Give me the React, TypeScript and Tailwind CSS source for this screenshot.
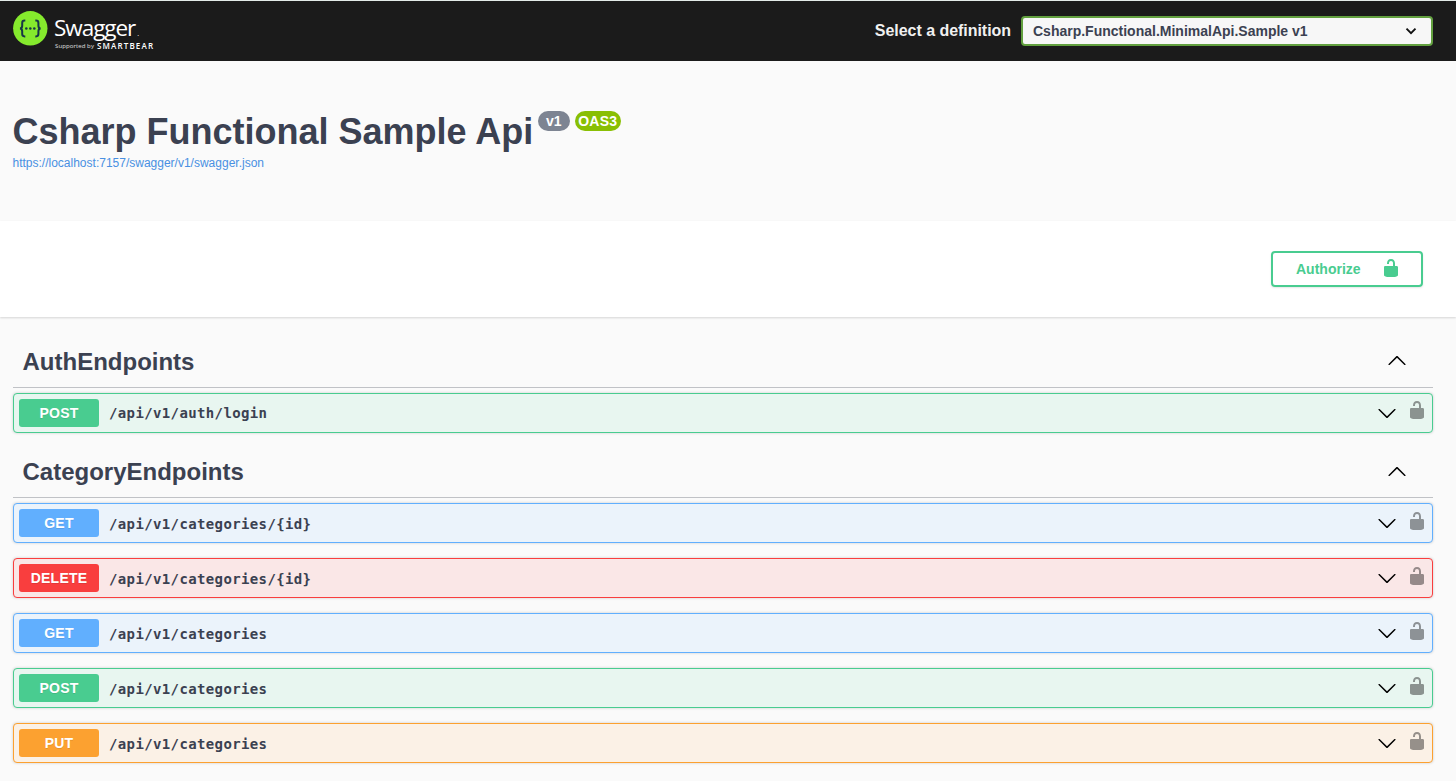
type Method = "GET" | "POST" | "PUT" | "DELETE";

const methodStyles: Record<Method, { row: string; badge: string }> = {
  GET: { row: "border-[#61affe] bg-[#ebf3fb]", badge: "bg-[#61affe]" },
  POST: { row: "border-[#49cc90] bg-[#e8f6f0]", badge: "bg-[#49cc90]" },
  PUT: { row: "border-[#fca130] bg-[#fbf1e6]", badge: "bg-[#fca130]" },
  DELETE: { row: "border-[#f93e3e] bg-[#fae7e7]", badge: "bg-[#f93e3e]" },
};

const sections: { name: string; shift: boolean; operations: { method: Method; path: string }[] }[] = [
  {
    name: "AuthEndpoints",
    shift: false,
    operations: [{ method: "POST", path: "/api/v1/auth/login" }],
  },
  {
    name: "CategoryEndpoints",
    shift: true,
    operations: [
      { method: "GET", path: "/api/v1/categories/{id}" },
      { method: "DELETE", path: "/api/v1/categories/{id}" },
      { method: "GET", path: "/api/v1/categories" },
      { method: "POST", path: "/api/v1/categories" },
      { method: "PUT", path: "/api/v1/categories" },
    ],
  },
];

function Unlocked({ className = "" }: { className?: string }) {
  return (
    <svg viewBox="0 0 20 20" className={`size-5 shrink-0 ${className}`} fill="currentColor" aria-hidden="true">
      <path d="M15.8 8H14V5.6C14 2.703 12.665 1 10 1 7.334 1 6 2.703 6 5.6V6h2v-.801C8 3.754 8.797 3 10 3c1.203 0 2 .754 2 2.199V8H4c-.553 0-1 .646-1 1.199V17c0 .549.428 1.139.951 1.307l1.197.387C5.672 18.861 6.55 19 7.1 19h5.8c.549 0 1.428-.139 1.951-.307l1.196-.387c.524-.167.953-.757.953-1.306V9.199C17 8.646 16.352 8 15.8 8z" />
    </svg>
  );
}

function Arrow({ up = false, className = "" }: { up?: boolean; className?: string }) {
  return (
    <svg viewBox="0 0 20 20" className={`size-5 shrink-0 ${className}`} fill="#000" aria-hidden="true">
      <path
        d={
          up
            ? "M17.418 14.908c.272.268.709.268.979 0s.271-.701 0-.969l-7.908-7.83c-.27-.268-.707-.268-.979 0l-7.908 7.83c-.27.268-.27.701 0 .969.271.268.709.268.979 0L10 7.767l7.418 7.141z"
            : "M17.418 6.109c.272-.268.709-.268.979 0s.271.701 0 .969l-7.908 7.83c-.27.268-.707.268-.979 0l-7.908-7.83c-.27-.268-.27-.701 0-.969.271-.268.709-.268.979 0L10 13.25l7.418-7.141z"
        }
      />
    </svg>
  );
}

function Logo() {
  return (
    <div className="flex items-start">
      <svg viewBox="0 0 35 35" className="mt-[10px] size-[35px] shrink-0" aria-hidden="true">
        <circle cx="17.3" cy="17.3" r="17.2" fill="#85ea2d" />
        <g fill="none" stroke="#173647" strokeWidth="2">
          <path d="M12.3 9.6h-.7c-1.8 0-2.4.8-2.4 2.3v2.8c0 1.7-.6 2.7-2.2 2.8 1.6.1 2.2 1.1 2.2 2.8v2.8c0 1.5.6 2.3 2.4 2.3h.7" />
          <path d="M22.3 9.6h.7c1.8 0 2.4.8 2.4 2.3v2.8c0 1.7.6 2.7 2.2 2.8-1.6.1-2.2 1.1-2.2 2.8v2.8c0 1.5-.6 2.3-2.4 2.3h-.7" />
        </g>
        <g fill="#173647">
          <circle cx="13.3" cy="17.5" r="1.3" />
          <circle cx="17.3" cy="17.5" r="1.3" />
          <circle cx="21.3" cy="17.5" r="1.3" />
        </g>
      </svg>
      <div className="ml-[6px] font-['Open_Sans',sans-serif] text-white">
        <div className="mt-[13px] flex h-[26px] items-start leading-[27px]">
          <span className="text-[22.5px] tracking-[-1.05px]">Swagger</span>
          <span className="mt-[6px] ml-[2px] text-[7px] leading-[27px]">.</span>
        </div>
        <div className="flex h-3 items-center pl-px whitespace-nowrap leading-3">
          <span className="w-[42px] text-[6px] tracking-[0.1px] text-white/85">Supported by</span>
          <span className="text-[8px] font-semibold tracking-[1.15px]">SMARTBEAR</span>
        </div>
      </div>
    </div>
  );
}

export default function App() {
  return (
    <div className="h-[781px] overflow-hidden bg-[#fafafa] font-['Liberation_Sans',Arial,sans-serif] text-[#3b4151]">
      <header className="flex h-[61px] justify-between border-t border-[#e3ebe8] bg-[#1b1b1b] pr-[23px] pl-[13px]">
        <Logo />
        <div className="flex items-center">
          <span className="mr-[10px] text-base font-bold tracking-[-0.04px] text-[#f0f0f0]">Select a definition</span>
          <button className="flex h-[30px] w-[412px] items-center justify-between rounded border-2 border-[#62a03f] bg-[#f7f7f7] pr-[14px] pl-[10px] text-sm font-bold">
            <span>Csharp.Functional.MinimalApi.Sample v1</span>
            <svg viewBox="0 0 12 12" className="size-3" fill="none" stroke="#111" strokeWidth="1.9" aria-hidden="true">
              <path d="M1.5 3.6L6 8.1l4.5-4.5" />
            </svg>
          </button>
        </div>
      </header>

      <section className="h-40 pr-[13px] pl-[12.5px] pt-[50px]">
        <div className="flex items-start">
          <h1 className="text-[36px] leading-[41px] font-bold whitespace-nowrap">Csharp Functional Sample Api</h1>
          <span className="ml-[4.5px] flex h-5 w-8 items-center justify-center rounded-full bg-[#7d8492] text-sm font-bold text-white">v1</span>
          <span className="ml-[5px] flex h-5 w-[46px] items-center justify-center rounded-full bg-[#89bf04] text-sm font-bold tracking-[0.2px] text-white">OAS3</span>
        </div>
        <a href="#spec" className="mt-[3px] block w-fit text-xs leading-4 text-[#4990e2]">
          https://localhost:7157/swagger/v1/swagger.json
        </a>
      </section>

      <section className="flex h-24 items-start justify-end bg-white pt-[30px] pr-[33px] shadow-[0_1px_2px_0_rgba(0,0,0,.15)]">
        <button className="flex h-9 w-[152px] items-center justify-between rounded border-2 border-[#49cc90] pr-5 pl-[23px] text-sm font-bold text-[#49cc90] shadow-[0_1px_2px_rgba(0,0,0,.1)]">
          <span>Authorize</span>
          <Unlocked className="-mt-0.5" />
        </button>
      </section>

      <main className="flex flex-col gap-[10px] pt-[21px] pr-[23px] pl-[13px]">
        {sections.map((section) => (
          <section key={section.name}>
            <h2 className="flex h-[50px] items-start justify-between border-b border-[#3b4151]/30 pr-[26px] pl-[9.5px] text-2xl leading-[28px] font-bold">
              <span className="mt-[10px]">{section.name}</span>
              <Arrow up className={section.shift ? "mt-[13px]" : "mt-3"} />
            </h2>
            <div className="flex flex-col gap-[15px] pt-[5px] pb-[5px]">
              {section.operations.map(({ method, path }) => (
                <div
                  key={method + path}
                  className={`flex h-10 items-center rounded border pr-[5px] pl-[5px] shadow-[0_0_3px_rgba(0,0,0,.19)] ${methodStyles[method].row}`}
                >
                  <span
                    className={`flex h-7 w-20 items-center justify-center rounded-[3px] text-sm font-bold tracking-[0.25px] text-white [text-shadow:0_1px_0_rgba(0,0,0,.1)] ${methodStyles[method].badge}`}
                  >
                    {method}
                  </span>
                  <span
                    className={`ml-[10px] grow font-['DejaVu_Sans_Mono',monospace] text-[14px] font-bold tracking-[0.37px] ${section.shift ? "pt-0.5" : ""}`}
                  >
                    {path}
                  </span>
                  <Arrow className="mr-[10px]" />
                  <Unlocked className={`text-black/40 ${section.shift ? "-mt-1" : "-mt-1.5"}`} />
                </div>
              ))}
            </div>
          </section>
        ))}
      </main>
    </div>
  );
}
